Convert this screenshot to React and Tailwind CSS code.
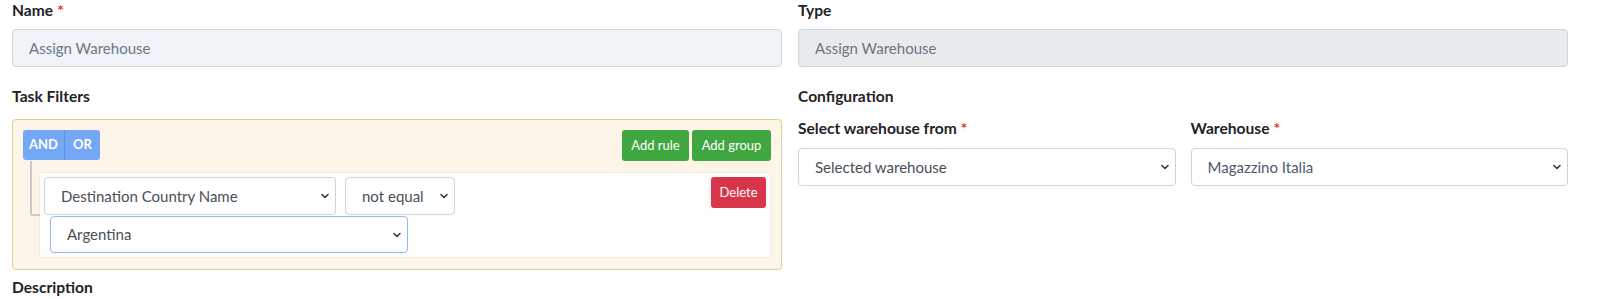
import { ChevronDown } from 'lucide-react';

const font = { fontFamily: 'Lato, "Open Sans", sans-serif' };

function Label({ children, required, className = '' }) {
  return (
    <div className={`text-[15.6px] leading-[20px] font-bold text-[#1f2326] ${className}`}>
      {children}
      {required && <span className="text-[#e3342f] ml-1">*</span>}
    </div>
  );
}

// Select box with custom chevron
function Select({ value, className = '', textClass = 'text-[#495057]' }) {
  return (
    <div className={`relative flex items-center bg-white border rounded-[4px] ${className}`}>
      <span className={`pl-[16px] text-[15px] ${textClass}`}>{value}</span>
      <ChevronDown
        size={12}
        strokeWidth={3.2}
        className="absolute right-[4px] top-1/2 -translate-y-1/2 text-[#343a40]"
      />
    </div>
  );
}

export default function App() {
  return (
    <div className="bg-white w-[1597px] h-[299px] pl-[12px] pr-[29px] overflow-hidden" style={font}>
      <div className="grid grid-cols-2 gap-x-[16px]">
        {/* Left column */}
        <div>
          <Label required>Name</Label>
          <div className="mt-[9px] h-[38px] flex items-center rounded-[4px] border border-[#cfd5dd] bg-[#f0f4f8] pl-[16px] text-[15px] text-[#6b7787]">
            Assign Warehouse
          </div>

          <Label className="mt-[19px]">Task Filters</Label>
          <div className="mt-[13px] h-[151px] rounded-[4px] border border-[#dfcb9c] bg-[#fcf5e8] p-[10px]">
            <div className="flex items-start justify-between">
              <div className="flex h-[30px] rounded-[3px] overflow-hidden text-[13px] font-bold text-white">
                <div className="w-[42px] flex items-center justify-center bg-[#74a7f6] border-r border-[#5c92ee]">AND</div>
                <div className="w-[35px] flex items-center justify-center bg-[#74a7f6]">OR</div>
              </div>
              <div className="flex gap-[3px] text-[13px] text-white">
                <div className="h-[31px] w-[67px] flex items-center justify-center rounded-[3px] bg-[#40a63f]">Add rule</div>
                <div className="h-[31px] w-[79px] flex items-center justify-center rounded-[3px] bg-[#40a63f]">Add group</div>
              </div>
            </div>

            <div className="relative ml-[16px] mt-[11px] h-[86px] rounded-[3px] border border-[#f1ece3] bg-[#fffdfb] px-[4px] pt-[4px]">
              <div className="absolute left-[-10px] top-[-12px] w-[10px] h-[55px] border-l-2 border-b-2 border-[#c9c9c9] rounded-bl-[3px]" />
              <div className="flex items-start justify-between">
                <div className="flex gap-[9px]">
                  <Select value="Destination Country Name" className="w-[292px] h-[38px] border-[#ced4da]" />
                  <Select value="not equal" className="w-[110px] h-[38px] border-[#ced4da]" />
                </div>
                <div className="h-[31px] w-[55px] flex items-center justify-center rounded-[3px] bg-[#d9354a] text-[13px] text-white">
                  Delete
                </div>
              </div>
              <Select
                value="Argentina"
                className="ml-[6px] mt-[1px] w-[358px] h-[37px] border-[#8fb8f6]"
              />
            </div>
          </div>

          <Label className="mt-[7px]">Description</Label>
        </div>

        {/* Right column */}
        <div>
          <Label>Type</Label>
          <div className="mt-[9px] h-[38px] flex items-center rounded-[4px] border border-[#cfd4da] bg-[#e8ebee] pl-[16px] text-[15px] text-[#6c7580]">
            Assign Warehouse
          </div>

          <Label className="mt-[19px]">Configuration</Label>
          <div className="mt-[12px] grid grid-cols-2 gap-x-[15px]">
            <div>
              <Label required>Select warehouse from</Label>
              <Select value="Selected warehouse" className="mt-[10px] h-[38px] border-[#ced4da]" />
            </div>
            <div>
              <Label required>Warehouse</Label>
              <Select value="Magazzino Italia" className="mt-[10px] h-[38px] border-[#ced4da]" textClass="text-[#4a5a6e]" />
            </div>
          </div>
        </div>
      </div>
    </div>
  );
}
